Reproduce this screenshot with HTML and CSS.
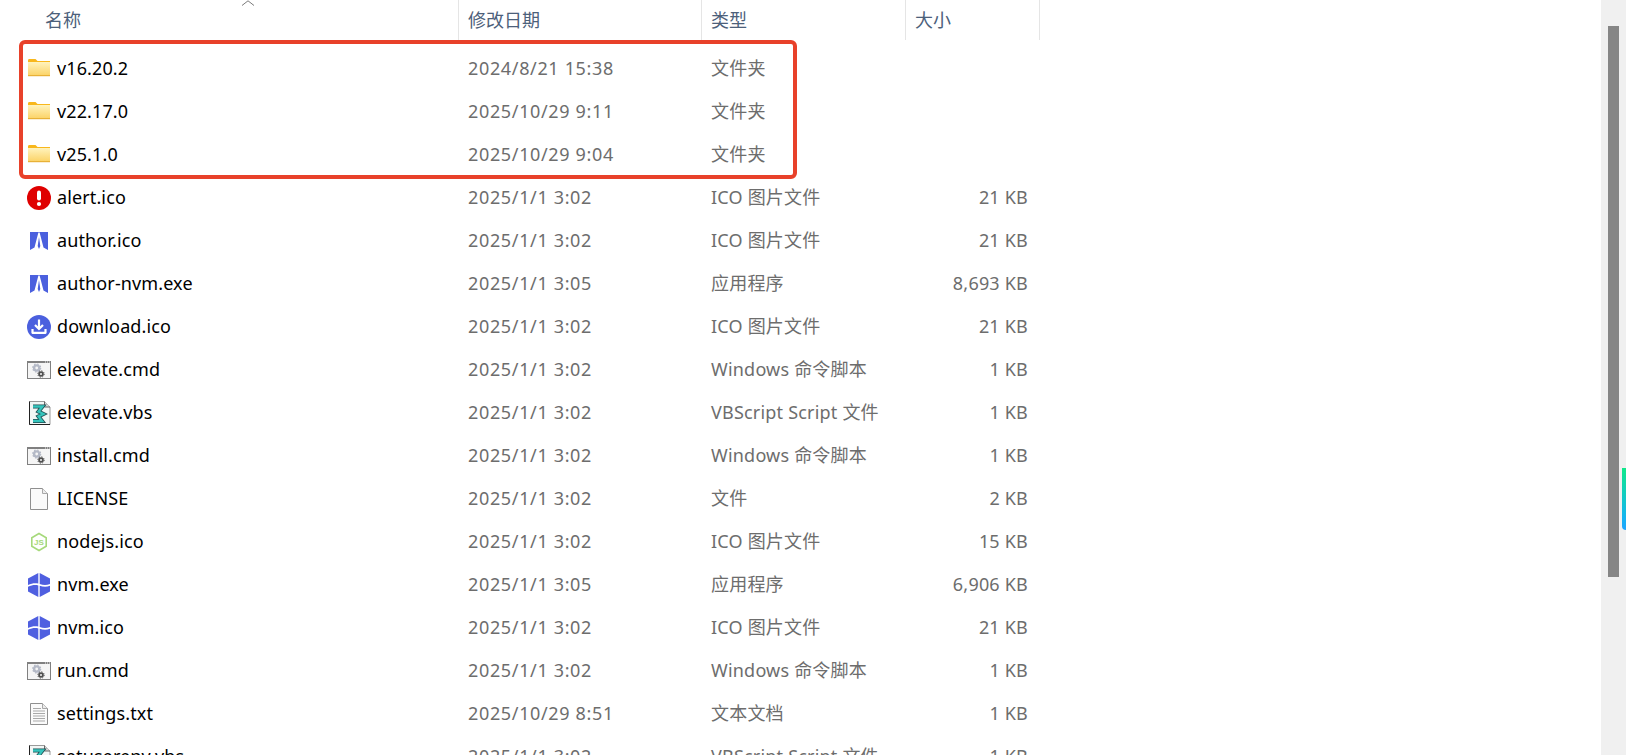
FILE: index.html
```html
<!DOCTYPE html>
<html lang="zh-CN">
<head>
    <meta charset="UTF-8">
    <meta name="viewport" content="width=device-width, initial-scale=1.0">
    <title>nvm</title>
    <link rel="stylesheet" href="styles.css">
</head>
<body>
    <svg class="sprite" xmlns="http://www.w3.org/2000/svg">
        <defs>
            <linearGradient id="folder-fill" x1="0" y1="0" x2="0" y2="1">
                <stop offset="0" stop-color="#fff3bd"/>
                <stop offset="1" stop-color="#fbd264"/>
            </linearGradient>
        </defs>
        <symbol id="i-folder" viewBox="0 0 24 24">
            <path d="M1 3.500C1 2.600 1.500 2 2.300 2H8.500L10.500 4H23V6H1Z" fill="#f8b71c"/>
            <rect x="1" y="5" width="22" height="14" fill="url(#folder-fill)"/>
            <rect x="1" y="18.200" width="22" height="1" fill="#e3a92c"/>
        </symbol>
        <symbol id="i-alert" viewBox="0 0 24 24">
            <circle cx="12" cy="12" r="12" fill="#df0000"/>
            <rect x="10" y="4.500" width="4" height="10" rx="2" fill="#fff"/>
            <circle cx="12" cy="18" r="2.100" fill="#fff"/>
        </symbol>
        <symbol id="i-author" viewBox="0 0 24 24">
            <path d="M3 3H21V21L16.500 18.500L12.600 3.500H11.400L7.500 18.500L3 21Z" fill="#4b60de"/>
            <path d="M12 8L13.300 17L12 20L10.700 17Z" fill="#4b60de"/>
        </symbol>
        <symbol id="i-download" viewBox="0 0 24 24">
            <circle cx="12" cy="12" r="12" fill="#4b60de"/>
            <path d="M12 4.500V13.500M8 10L12 14L16 10" fill="none" stroke="#fff" stroke-width="2.200"/>
            <path d="M5.500 14V17.800H18.500V14" fill="none" stroke="#fff" stroke-width="2.200" stroke-linejoin="round"/>
        </symbol>
        <symbol id="i-cmd" viewBox="0 0 24 24">
            <rect x="0.500" y="3.500" width="23" height="17" fill="#f5f5f5" stroke="#808080"/>
            <rect x="0" y="3" width="24" height="2" fill="#808080"/>
            <path d="M18 4H24" stroke="#f0f0f0" stroke-dasharray="1 1"/>
            <circle cx="9.700" cy="10" r="2.600" fill="none" stroke="#b4b9c6" stroke-width="2.400"/>
            <circle cx="9.700" cy="10" r="4" fill="none" stroke="#b4b9c6" stroke-width="1.200" stroke-dasharray="1.500 1.640"/>
            <circle cx="14" cy="16" r="1.900" fill="none" stroke="#505050" stroke-width="1.800"/>
            <circle cx="14" cy="16" r="3.200" fill="none" stroke="#505050" stroke-width="1" stroke-dasharray="1.200 1.310"/>
        </symbol>
        <symbol id="i-vbs" viewBox="0 0 24 24">
            <path d="M2.500 0.500H17.500L23 6V23.500H2.500Z" fill="#f1f6f5" stroke="#9a9a9a"/>
            <path d="M2.500 0.500V23.500H23" fill="none" stroke="#222"/>
            <path d="M17.500 0.500V6H23" fill="#d8d8d8" stroke="#666"/>
            <path d="M6 5.500H15.500L11.500 10.500L16.500 13L11.500 15.500L15 20H6" fill="none" stroke="#1e4c50" stroke-width="4"/>
            <path d="M6 5.500H15.500L11.500 10.500L16.500 13L11.500 15.500L15 20H6" fill="none" stroke="#35c4bc" stroke-width="2.400"/>
        </symbol>
        <symbol id="i-file" viewBox="0 0 24 24">
            <path d="M3.500 1.500H15.500L20.500 6.500V22.500H3.500Z" fill="#fafafa" stroke="#8f8f8f"/>
            <path d="M15.500 1.500V6.500H20.500" fill="#ececec" stroke="#a8a8a8"/>
        </symbol>
        <symbol id="i-nvm" viewBox="0 0 24 24">
            <path d="M11.300 0V10.600C8.500 9.800 5 10 1 12V5.500Z" fill="#4f5fe0"/>
            <path d="M12.700 0L23 5.500V11C19.500 12.500 16 12.300 12.700 11Z" fill="#4f5fe0"/>
            <path d="M1 13.800C5 11.800 8.500 11.600 11.300 12.400V24L1 18.500Z" fill="#4f5fe0"/>
            <path d="M12.700 12.800C16 14 19.500 14.300 23 12.800V18.500L12.700 24Z" fill="#4f5fe0"/>
        </symbol>
        <symbol id="i-txt" viewBox="0 0 24 24">
            <path d="M3.500 1.500H15.500L20.500 6.500V22.500H3.500Z" fill="#fafafa" stroke="#8f8f8f"/>
            <path d="M15.500 1.500V6.500H20.500" fill="#ececec" stroke="#a8a8a8"/>
            <path d="M6 6.500H14M6 9H18M6 11.500H18M6 14H18M6 16.500H18M6 19H18" stroke="#a9a9a9"/>
        </symbol>
    </svg>

    <div class="window">
        <div class="explorer">
            <div class="sort-mark">
                <svg class="sort-arrow" viewBox="0 0 14 6"><path d="M1 5.500L7 0.800L13 5.500" fill="none" stroke="#7a7a7a"/></svg>
            </div>
            <div class="columns">
                <div class="col-head col-name">名称</div>
                <div class="col-head">修改日期</div>
                <div class="col-head">类型</div>
                <div class="col-head">大小</div>
            </div>
            <div class="files">
                <div class="file-row">
                    <div class="file-name"><svg class="icon"><use href="#i-folder"/></svg>v16.20.2</div>
                    <div class="file-date">2024/8/21 15:38</div>
                    <div class="file-type">文件夹</div>
                    <div class="file-size"></div>
                </div>
                <div class="file-row">
                    <div class="file-name"><svg class="icon"><use href="#i-folder"/></svg>v22.17.0</div>
                    <div class="file-date">2025/10/29 9:11</div>
                    <div class="file-type">文件夹</div>
                    <div class="file-size"></div>
                </div>
                <div class="file-row">
                    <div class="file-name"><svg class="icon"><use href="#i-folder"/></svg>v25.1.0</div>
                    <div class="file-date">2025/10/29 9:04</div>
                    <div class="file-type">文件夹</div>
                    <div class="file-size"></div>
                </div>
                <div class="file-row">
                    <div class="file-name"><svg class="icon"><use href="#i-alert"/></svg>alert.ico</div>
                    <div class="file-date">2025/1/1 3:02</div>
                    <div class="file-type">ICO 图片文件</div>
                    <div class="file-size">21 KB</div>
                </div>
                <div class="file-row">
                    <div class="file-name"><svg class="icon"><use href="#i-author"/></svg>author.ico</div>
                    <div class="file-date">2025/1/1 3:02</div>
                    <div class="file-type">ICO 图片文件</div>
                    <div class="file-size">21 KB</div>
                </div>
                <div class="file-row">
                    <div class="file-name"><svg class="icon"><use href="#i-author"/></svg>author-nvm.exe</div>
                    <div class="file-date">2025/1/1 3:05</div>
                    <div class="file-type">应用程序</div>
                    <div class="file-size">8,693 KB</div>
                </div>
                <div class="file-row">
                    <div class="file-name"><svg class="icon"><use href="#i-download"/></svg>download.ico</div>
                    <div class="file-date">2025/1/1 3:02</div>
                    <div class="file-type">ICO 图片文件</div>
                    <div class="file-size">21 KB</div>
                </div>
                <div class="file-row">
                    <div class="file-name"><svg class="icon"><use href="#i-cmd"/></svg>elevate.cmd</div>
                    <div class="file-date">2025/1/1 3:02</div>
                    <div class="file-type">Windows 命令脚本</div>
                    <div class="file-size">1 KB</div>
                </div>
                <div class="file-row">
                    <div class="file-name"><svg class="icon"><use href="#i-vbs"/></svg>elevate.vbs</div>
                    <div class="file-date">2025/1/1 3:02</div>
                    <div class="file-type">VBScript Script 文件</div>
                    <div class="file-size">1 KB</div>
                </div>
                <div class="file-row">
                    <div class="file-name"><svg class="icon"><use href="#i-cmd"/></svg>install.cmd</div>
                    <div class="file-date">2025/1/1 3:02</div>
                    <div class="file-type">Windows 命令脚本</div>
                    <div class="file-size">1 KB</div>
                </div>
                <div class="file-row">
                    <div class="file-name"><svg class="icon"><use href="#i-file"/></svg>LICENSE</div>
                    <div class="file-date">2025/1/1 3:02</div>
                    <div class="file-type">文件</div>
                    <div class="file-size">2 KB</div>
                </div>
                <div class="file-row">
                    <div class="file-name">
                        <svg class="icon" viewBox="0 0 24 24">
                            <path d="M12 3.500L19.200 7.700V16.300L12 20.500L4.800 16.300V7.700Z" fill="#fff" stroke="#a6d97b" stroke-width="1.600"/>
                            <text class="node-js" x="12" y="15" text-anchor="middle">JS</text>
                        </svg>nodejs.ico
                    </div>
                    <div class="file-date">2025/1/1 3:02</div>
                    <div class="file-type">ICO 图片文件</div>
                    <div class="file-size">15 KB</div>
                </div>
                <div class="file-row">
                    <div class="file-name"><svg class="icon"><use href="#i-nvm"/></svg>nvm.exe</div>
                    <div class="file-date">2025/1/1 3:05</div>
                    <div class="file-type">应用程序</div>
                    <div class="file-size">6,906 KB</div>
                </div>
                <div class="file-row">
                    <div class="file-name"><svg class="icon"><use href="#i-nvm"/></svg>nvm.ico</div>
                    <div class="file-date">2025/1/1 3:02</div>
                    <div class="file-type">ICO 图片文件</div>
                    <div class="file-size">21 KB</div>
                </div>
                <div class="file-row">
                    <div class="file-name"><svg class="icon"><use href="#i-cmd"/></svg>run.cmd</div>
                    <div class="file-date">2025/1/1 3:02</div>
                    <div class="file-type">Windows 命令脚本</div>
                    <div class="file-size">1 KB</div>
                </div>
                <div class="file-row">
                    <div class="file-name"><svg class="icon"><use href="#i-txt"/></svg>settings.txt</div>
                    <div class="file-date">2025/10/29 8:51</div>
                    <div class="file-type">文本文档</div>
                    <div class="file-size">1 KB</div>
                </div>
                <div class="file-row">
                    <div class="file-name"><svg class="icon"><use href="#i-vbs"/></svg>setuserenv.vbs</div>
                    <div class="file-date">2025/1/1 3:02</div>
                    <div class="file-type">VBScript Script 文件</div>
                    <div class="file-size">1 KB</div>
                </div>
            </div>
            <div class="red-box"></div>
        </div>
        <div class="scrollbar">
            <div class="scroll-thumb"></div>
        </div>
        <div class="edge-strip"></div>
    </div>
</body>
</html>
```

FILE: styles.css
```css
* {
    box-sizing: border-box;
}

html, body {
    margin: 0;
    height: 100%;
    overflow: hidden;
    background-color: white;
}

body {
    font-family: "Noto Sans", "Noto Sans CJK SC", sans-serif;
    font-size: 18px;
}

.sprite {
    display: block;
    width: 0;
    height: 0;
    overflow: hidden;
}

.window {
    position: relative;
    display: flex;
    height: 755px;
    overflow: hidden;
}

.explorer {
    position: relative;
    flex: 1;
    min-width: 0;
}

/* header */
.sort-mark {
    position: absolute;
    top: 0;
    left: 241px;
    width: 14px;
    height: 7px;
}

.sort-arrow {
    display: block;
    width: 14px;
    height: 6px;
}

.columns {
    display: grid;
    grid-template-columns: 459px 243px 204px 134px;
    height: 40px;
}

.col-head {
    padding-left: 9px;
    border-right: 1px solid #e5e5e5;
    color: #4c607a;
    line-height: 40px;
}

.col-name {
    padding-left: 45px;
}

/* rows */
.files {
    padding-top: 7px;
}

.file-row {
    display: grid;
    grid-template-columns: 459px 243px 204px 134px;
    height: 43px;
    line-height: 43px;
    color: #6d6d6d;
}

.file-name {
    display: flex;
    align-items: center;
    gap: 6px;
    padding-left: 27px;
    color: #000;
    letter-spacing: 0.12px;
}

.icon {
    flex: none;
    width: 24px;
    height: 24px;
}

.node-js {
    font-family: "Liberation Sans", sans-serif;
    font-size: 8px;
    font-weight: 700;
    fill: #a6d97b;
}

.file-date {
    padding-left: 9px;
    letter-spacing: 0.65px;
}

.file-type {
    padding-left: 9px;
    letter-spacing: 0.2px;
}

.file-size {
    padding-right: 12px;
    text-align: right;
    letter-spacing: 0.2px;
}

/* annotation over the folders */
.red-box {
    position: absolute;
    top: 40px;
    left: 19px;
    width: 778px;
    height: 139px;
    border: 4px solid #e8412a;
    border-radius: 6px;
}

/* scrollbar */
.scrollbar {
    flex: none;
    width: 25px;
    padding: 26px 0 0 7px;
    background-color: #f0f0f0;
}

.scroll-thumb {
    width: 11px;
    height: 551px;
    background-color: #868686;
}

.edge-strip {
    position: absolute;
    top: 468px;
    right: 0;
    width: 4px;
    height: 62px;
    border-bottom-left-radius: 4px;
    background: linear-gradient(#10e88a, #14b4f0 80%, #20a4ff);
}
```
